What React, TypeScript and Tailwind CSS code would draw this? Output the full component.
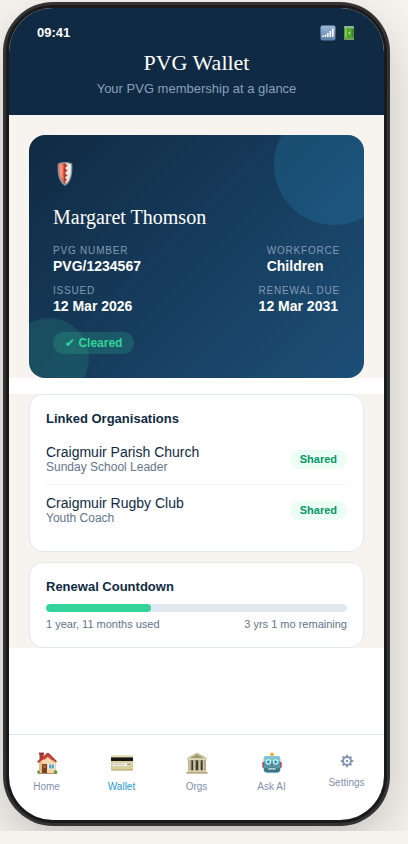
import React from 'react';

const ORGS = [
    { name: "Craigmuir Parish Church", role: "Sunday School Leader" },
    { name: "Craigmuir Rugby Club", role: "Youth Coach" }
];

const DETAILS = [
    [{ label: "PVG Number", value: "PVG/1234567" }, { label: "Workforce", value: "Children" }],
    [{ label: "Issued", value: "12 Mar 2026" }, { label: "Renewal due", value: "12 Mar 2031" }]
];

const SignalIcon = () => (
    <svg viewBox="0 0 16 16" className="w-4 h-4" aria-hidden="true">
        <defs>
            <linearGradient id="signal" x1="0" y1="0" x2="0" y2="1">
                <stop offset="0" stopColor="#9db8d6" />
                <stop offset="1" stopColor="#5c7fa8" />
            </linearGradient>
        </defs>
        <rect x="0.5" y="0.5" width="15" height="15" rx="2" fill="url(#signal)" />
        <path d="M2.3 10.5h1.5V12H2.3zM4.7 9.5h1.5V12H4.7zM7.1 8h1.5v4H7.1zM9.5 6h1.6v6H9.5zM12 3.5h1.6V12H12z" fill="#fff" />
    </svg>
);

const BatteryIcon = () => (
    <svg viewBox="1 0 12 16" className="w-3 h-4" aria-hidden="true">
        <rect x="1" y="1" width="10" height="14" rx="1.5" fill="#4f9f2e" />
        <rect x="1" y="1" width="10" height="2.5" rx="1" fill="#8fb58a" />
        <rect x="1" y="12.5" width="10" height="2.5" rx="1" fill="#6fa05a" />
        <rect x="2" y="4" width="2" height="8" fill="#7ccb45" />
        <rect x="9" y="4" width="1.5" height="8" fill="#34851d" />
        <path d="M6.6 5.2 5 8.2h1.2l-.4 2.6L7.6 7.6H6.3z" fill="#c8f09a" />
    </svg>
);

const ShieldIcon = () => (
    <svg viewBox="0 -1 24 28" className="w-6 h-7" aria-hidden="true">
        <path d="M4.8 3.4Q12 .8 19.2 3.4C19.6 12 19.4 20.5 12.6 25.6Q12 26 11.4 25.6C4.6 20.5 4.4 12 4.8 3.4z" fill="#8d9598" />
        <path d="M6 4.4Q9 3.3 12.3 3.2V24C6.6 19.6 5.8 12 6 4.4z" fill="#f0705c" />
        <path d="M12.3 3.2Q15 3.3 18 4.4C18.3 12 17.7 19.6 12.3 24z" fill="#e8ebea" />
        <path d="M10.6 3.4h1.7l2.4 2.4-2.4 1.6v1.2l2.4 2-2.4 1.6v1.2l2.4 2-2.4 1.6v1.2l1.8 1.6-1.8 1.8V24l-1.7-1.6z" fill="#b9392b" />
        <path d="M6.8 5v7c.3 3 1.1 6 2.6 8V4.4z" fill="#fa9380" />
    </svg>
);

const HomeIcon = () => (
    <svg viewBox="0 0 24 24" className="w-6 h-6" aria-hidden="true">
        <path d="M4.5 2.2h4v7h-4z" fill="#a93b32" />
        <path d="M4 1.6h5v1.8H4z" fill="#8e2c27" />
        <path d="M4 11 13 3.5l8 7.5v11.5H4z" fill="#f4d3a6" />
        <path d="M4 11 7 8.6v13.9H4z" fill="#e6bd8c" />
        <path d="m2.2 10.4 9.6-8.2q1.1-.8 2.2 0l8 8-1.3 1.4-7.8-7.3-9.5 7.6z" fill="#b83a32" />
        <path d="m7 8.4 6-4.9 6.8 6.3z" fill="#c94b3e" />
        <path d="m6.8 10.9 6.1-5 5.8 5z" fill="#f6d9b0" />
        <path d="M7 13h5v9.5H7z" fill="#7a4126" />
        <path d="M8 14h3v3H8z" fill="#a2643d" />
        <path d="M13.5 12.8h6v5.4h-6z" fill="#fff" />
        <path d="M14.1 13.4h4.8v4.2h-4.8z" fill="#4f9fd0" />
        <path d="M16.2 13.4h.6v4.2h-.6z" fill="#d8ebf4" />
        <path d="M3 22h19v.9H3z" fill="#a88567" />
        <circle cx="3.5" cy="21" r="1.4" fill="#5f9832" />
        <circle cx="20.6" cy="21" r="1.8" fill="#5f9832" />
    </svg>
);

const CardIcon = () => (
    <svg viewBox="0 0 24 24" className="w-6 h-6" aria-hidden="true">
        <rect x="1" y="4.4" width="22" height="15.2" rx="1.2" fill="#d9cf9c" />
        <rect x="1" y="4.4" width="22" height="2.6" rx="1" fill="#e5dfb8" />
        <path d="M1 6.4h22V10H1z" fill="#171511" />
        <path d="M3 12.1h16.5v2.9H3z" fill="#f4f2ea" />
        <path d="m4 14 1.5-1.2L7 14l1.5-1.2L10 14l1.5-1.2 1.5 1.2 1.5-1.1" fill="none" stroke="#918b80" strokeWidth=".6" />
        <path d="M17.2 12.6h2.7v1.8h-2.7z" fill="#9b968c" />
        <path d="M1 18h22v.6q0 1-1 1H2q-1 0-1-1z" fill="#c4b77c" />
    </svg>
);

const BankIcon = () => (
    <svg viewBox="0 0 24 24" className="w-6 h-6" aria-hidden="true">
        <path d="M3.5 9h17v11h-17z" fill="#3c382d" />
        <path d="M12 1.5 22 7v2.2H2V7z" fill="#c9c09c" />
        <path d="m12 3.4 6.5 3.8h-13z" fill="#9e9675" />
        <path d="M2 7.2h20v1.9H2z" fill="#ded6b4" />
        <path d="M3.5 9.2h2.8V20H3.5zM8.2 9.2h2.5V20H8.2zM13.3 9.2h2.5V20h-2.5zM17.7 9.2h2.8V20h-2.8z" fill="#d3caa5" />
        <path d="M5.3 9.8h1V20h-1zM9.8 9.8h.9V20h-.9zM14.9 9.8h.9V20h-.9zM19.5 9.8h1V20h-1z" fill="#9f9675" />
        <path d="M2.8 19.3h18.4v1.6H2.8z" fill="#d8cfaa" />
        <path d="M1.4 20.9h21.2v1.8H1.4z" fill="#b4aa83" />
    </svg>
);

const RobotIcon = () => (
    <svg viewBox="-0.5 0 25 24" className="w-6 h-6" aria-hidden="true">
        <path d="M11 3h2v3h-2z" fill="#87989c" />
        <circle cx="12" cy="3" r="2" fill="#f0b23c" />
        <rect x="1.8" y="10.6" width="3.4" height="6.6" rx="1.4" fill="#c84b4b" />
        <rect x="18.8" y="10.6" width="3.4" height="6.6" rx="1.4" fill="#c84b4b" />
        <rect x="3.4" y="4.8" width="17.2" height="17" rx="3.6" fill="#4b9daf" />
        <path d="M7 4.8h10q3.6 0 3.6 3.6v2H3.4v-2Q3.4 4.8 7 4.8z" fill="#86c3cd" />
        <path d="M3.4 17.5h17.2v.7q0 3.6-3.6 3.6H7q-3.6 0-3.6-3.6z" fill="#38798d" />
        <circle cx="8.2" cy="11" r="2.8" fill="#c9f5f5" />
        <circle cx="15.8" cy="11" r="2.8" fill="#c9f5f5" />
        <circle cx="8.2" cy="11" r="1.5" fill="#2593ae" />
        <circle cx="15.8" cy="11" r="1.5" fill="#2593ae" />
        <path d="m12 12.4 1.4 2.4h-2.8z" fill="#b6454a" />
        <rect x="7.4" y="16.4" width="9.2" height="3.2" rx="1" fill="#315b69" />
        <path d="M8.2 17h1.5v2H8.2zM10.3 17h1.5v2h-1.5zM12.4 17h1.5v2h-1.5zM14.5 17h1.3v2h-1.3z" fill="#e9f3f3" />
    </svg>
);

const GearIcon = () => (
    <svg viewBox="0 0 14 14" className="w-[14px] h-[14px]" fill="none" stroke="currentColor" aria-hidden="true">
        <circle cx="7" cy="7" r="4" strokeWidth="1.9" />
        <circle cx="7" cy="7" r="1.2" fill="currentColor" stroke="none" />
        <path d="M7 .8v2M7 11.2v2M.8 7h2M11.2 7h2M2.6 2.6 4 4M10 10l1.4 1.4M11.4 2.6 10 4M4 10l-1.4 1.4" strokeWidth="1.8" />
    </svg>
);

const TABS = [
    { label: "Home", icon: <HomeIcon />, box: "h-6" },
    { label: "Wallet", icon: <CardIcon />, box: "h-6", active: true },
    { label: "Orgs", icon: <BankIcon />, box: "h-6" },
    { label: "Ask AI", icon: <RobotIcon />, box: "h-6" },
    { label: "Settings", icon: <GearIcon />, box: "h-5" }
];

const MembershipCard = () => (
    <section className="relative overflow-hidden rounded-2xl p-6 text-white bg-linear-135 from-[#102a43] to-[#1d4f78]">
        <div className="absolute -top-[30px] -right-[30px] size-[120px] rounded-full bg-[#38bdf8]/15" />
        <div className="absolute -bottom-5 -left-5 size-20 rounded-full bg-[#34d399]/15" />
        <div className="relative">
            <ShieldIcon />
            <h2 className="mt-4 font-['Liberation_Serif',serif] text-xl leading-7">Margaret Thomson</h2>
            <dl className="mt-[13px] space-y-[10px]">
                {DETAILS.map((row, i) => (
                    <div key={i} className="flex justify-between">
                        {row.map((d) => (
                            <div key={d.label}>
                                <dt className="text-[10px] leading-[14px] tracking-[0.08em] uppercase text-[#829ab1]">{d.label}</dt>
                                <dd className="text-sm leading-4 font-bold">{d.value}</dd>
                            </div>
                        ))}
                    </div>
                ))}
            </dl>
            <span className="mt-[18px] inline-block rounded-full bg-[#34d399]/20 px-3 text-xs leading-[22px] font-bold text-[#34d399] align-top">✔ Cleared</span>
        </div>
    </section>
);

const App = () => {
    return (
        <div className="min-h-screen flex flex-col bg-[#f7f4ef] pb-[13px] font-['Liberation_Sans','DejaVu_Sans',sans-serif] text-[#102a43]">
            <div className="flex-1 flex flex-col overflow-hidden pt-2 pl-[9px] pr-6 pb-[11px]">
                <div className="flex-1 flex flex-col overflow-hidden rounded-[44px] bg-white shadow-[0_0_0_3px_#1a1a1a,0_0_0_6px_#333,0_20px_60px_rgba(0,0,0,0.25)]">
                    <header className="bg-[#102a43] pt-[17px] pb-[18px] text-center">
                        <div className="flex items-center justify-between px-7 text-white">
                            <span className="text-[13px] leading-4 font-bold">09:41</span>
                            <span className="flex gap-2">
                                <SignalIcon />
                                <BatteryIcon />
                            </span>
                        </div>
                        <h1 className="mt-2 font-['Liberation_Serif',serif] text-[22px] leading-7 text-white">PVG Wallet</h1>
                        <p className="mt-1 text-[13px] leading-4 text-[#8a9fbc]">Your PVG membership at a glance</p>
                    </header>

                    <main className="flex-1">
                        <div className="px-5 pt-5 bg-[#f7f4ef]">
                            <MembershipCard />
                        </div>

                        <div className="mt-4 px-5 space-y-[10px] bg-[#f7f4ef]">
                            {/* Organisations */}
                            <section className="rounded-[14px] border border-[#e2e8f0] bg-white p-4">
                                <h3 className="text-[13px] leading-4 font-bold">Linked Organisations</h3>
                                <ul className="mt-[7px] divide-y divide-[#f1f5f9]">
                                    {ORGS.map((o) => (
                                        <li key={o.name} className="flex items-center justify-between py-[10px]">
                                            <div>
                                                <p className="text-sm leading-4">{o.name}</p>
                                                <p className="text-xs leading-[14px] text-[#64748b]">{o.role}</p>
                                            </div>
                                            <span className="rounded-full bg-[#ecfdf5] px-[10px] text-[11px] leading-[19px] font-bold text-[#059669]">Shared</span>
                                        </li>
                                    ))}
                                </ul>
                            </section>

                            {/* Renewal */}
                            <section className="rounded-[14px] border border-[#e2e8f0] bg-white p-4">
                                <h3 className="text-[13px] leading-4 font-bold">Renewal Countdown</h3>
                                <div className="mt-[9px] h-2 overflow-hidden rounded-full bg-[#e2e8f0]">
                                    <div className="h-full rounded-full bg-[#34d399]" style={{ width: '35%' }} />
                                </div>
                                <div className="mt-[5px] flex justify-between text-[11px] leading-[14px] text-[#64748b]">
                                    <span>1 year, 11 months used</span>
                                    <span>3 yrs 1 mo remaining</span>
                                </div>
                            </section>
                        </div>
                    </main>

                    <nav className="flex items-start border-t border-[#dce5ec] pt-4 pb-[27px]">
                        {TABS.map((t) => (
                            <a key={t.label} href="#" className={`flex-1 flex flex-col items-center text-[10px] leading-3 ${t.active ? "text-[#1c9ad6]" : "text-[#8292b0]"}`}>
                                <span className={`flex items-center ${t.box}`}>{t.icon}</span>
                                <span className="mt-[6px]">{t.label}</span>
                            </a>
                        ))}
                    </nav>
                </div>
            </div>
        </div>
    );
};
export default App;
